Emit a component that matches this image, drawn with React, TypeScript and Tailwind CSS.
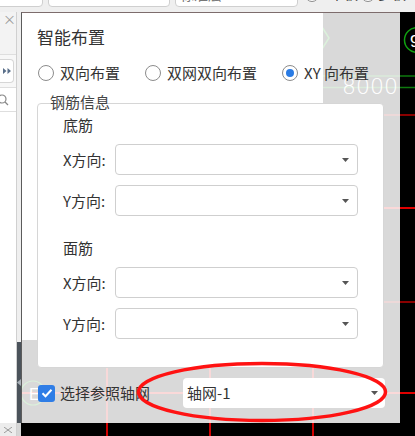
import React from "react";

function Caret() {
  return (
    <svg width="7" height="4" viewBox="0 0 7 4" className="shrink-0">
      <path d="M0 0h7L3.5 4z" fill="#555" />
    </svg>
  );
}

function Select({ value }: { value?: string }) {
  return (
    <div className="flex h-[31px] w-[243px] items-center justify-between rounded-[4px] border border-[#cfcfcf] bg-white pl-[5px] pr-[8px]">
      <span>{value}</span>
      <Caret />
    </div>
  );
}

function Row({ label }: { label: string }) {
  return (
    <div className="flex items-center">
      <span className="w-[52px] text-[15px] leading-[20px] text-[#333]">{label}</span>
      <Select />
    </div>
  );
}

function Radio({ label, checked }: { label: string; checked?: boolean }) {
  return (
    <div className="flex items-center gap-[6px]">
      <span className="flex h-[16px] w-[16px] items-center justify-center rounded-full border border-[#8c8c8c] bg-white">
        {checked && <span className="h-[8px] w-[8px] rounded-full bg-[#2a7be4]" />}
      </span>
      <span className="text-[15px] leading-[20px] text-[#333]">{label}</span>
    </div>
  );
}

export default function App() {
  return (
    <div className="flex h-[436px] w-[415px] flex-col overflow-hidden bg-black font-['Noto_Sans_CJK_SC','Noto_Sans',sans-serif] text-[#333]">
      {/* top toolbar (cut off) */}
      <div className="h-[12px] shrink-0 overflow-hidden bg-[#efefef]">
        <div className="-mt-[17px] flex h-[24px] items-stretch text-[14px] text-[#777]">
          <div className="-ml-[6px] w-[49px] rounded-[4px] border border-[#cfcfcf] bg-white" />
          <div className="ml-[5px] flex w-[122px] items-start overflow-hidden rounded-[4px] border border-[#cfcfcf] bg-white pl-[14px] pt-[3px] leading-none">
            2F~3F
          </div>
          <div className="ml-[5px] flex w-[123px] items-start overflow-hidden rounded-[4px] border border-[#cfcfcf] bg-white pl-[4px] pt-[3px] leading-none">
            标准层1
          </div>
          <div className="ml-[7px] flex items-start gap-[3px] pt-[3px] leading-none text-[#333]">
            <span className="mt-[2px] h-[14px] w-[14px] rounded-full border border-[#8c8c8c] bg-white" />
            <span className="ml-[8px]">平板</span>
            <span className="mt-[2px] h-[14px] w-[14px] rounded-full border border-[#8c8c8c] bg-white" />
            <span>多板</span>
          </div>
        </div>
      </div>

      <div className="flex h-[424px]">
        {/* left panel */}
        <div className="flex w-[17px] shrink-0 flex-col border-r border-[#d0d0d0] bg-white">
          <div className="h-[43px] border-b border-[#dedede] bg-[#f3f3f3] pl-[3px] text-[13px] leading-[14px] text-[#9a9a9a]">
            ×
          </div>
          <div className="flex h-[33px] items-center border-b border-[#dedede] bg-[#f7f7f7]">
            <div className="flex h-[24px] w-[14px] items-center justify-center rounded-r-[4px] border border-l-0 border-[#d6d6d6] bg-white">
              <svg width="8" height="6" viewBox="0 0 8 6">
                <path d="M0 0l3.5 3L0 6zM4.5 0L8 3 4.5 6z" fill="#5a6f8a" />
              </svg>
            </div>
          </div>
          <div className="flex h-[24px] items-center border-b border-[#dedede]">
            <svg width="10" height="12" viewBox="0 0 10 12">
              <circle cx="2" cy="5" r="4" fill="none" stroke="#888" strokeWidth="1.2" />
              <path d="M5 8l3 3" stroke="#888" strokeWidth="1.2" />
            </svg>
          </div>
          <div className="flex-1" />
          <div className="flex h-[13px] items-center bg-[#ececec] pl-[4px]">
            <svg width="8" height="6" viewBox="0 0 8 6">
              <path d="M0 0l4 3-4 3M8 0L4 3l4 3" fill="none" stroke="#999" strokeWidth="1" />
            </svg>
          </div>
        </div>

        {/* splitter */}
        <div className="flex w-[4px] shrink-0 flex-col">
          <div className="h-[330px] bg-[#efefef]" />
          <div className="flex h-[81px] items-center justify-center bg-[#4b535b]">
            <svg width="4" height="7" viewBox="0 0 4 7">
              <path d="M4 0v7L0 3.5z" fill="#a8b0b8" />
            </svg>
          </div>
          <div className="flex-1 bg-[#d6d6d6]" />
        </div>

        {/* canvas */}
        <div className="relative flex-1 bg-black">
          <svg className="absolute inset-0" width="394" height="424" viewBox="21 12 394 424">
            <line x1="21" y1="76" x2="415" y2="76" stroke="#0e7a0e" strokeWidth="1.5" />
            <line x1="21" y1="87.5" x2="415" y2="87.5" stroke="#0e7a0e" strokeWidth="1.5" />
            <line x1="21" y1="115" x2="415" y2="115" stroke="#8a0000" strokeWidth="2" />
            <line x1="21" y1="208" x2="415" y2="208" stroke="#e00000" strokeWidth="2" />
            <line x1="21" y1="302" x2="415" y2="302" stroke="#8a0000" strokeWidth="2" />
            <line x1="21" y1="393" x2="415" y2="393" stroke="#e00000" strokeWidth="2" />
            <line x1="107" y1="12" x2="107" y2="436" stroke="#d00000" strokeWidth="2" />
            <line x1="210" y1="12" x2="210" y2="436" stroke="#d00000" strokeWidth="2" />
            <line x1="313" y1="12" x2="313" y2="436" stroke="#d00000" strokeWidth="2" />
            <polyline points="322,27 329,38 322,49" fill="none" stroke="#10a010" strokeWidth="1.5" />
            <circle cx="417" cy="40" r="12.5" fill="black" stroke="#10a010" strokeWidth="1.5" />
            <text x="410" y="47" fill="white" fontSize="17" fontFamily="Liberation Sans, sans-serif">9</text>
            <text x="342" y="94" fill="white" fontSize="22" fontFamily="DejaVu Sans, sans-serif" fontWeight="200">8000</text>
            <circle cx="33" cy="393" r="12" fill="none" stroke="#10a010" strokeWidth="1.2" />
            <text x="29" y="400" fill="white" fontSize="16" fontFamily="Liberation Sans, sans-serif">E</text>
          </svg>

          {/* white panel lying under the translucent dialog */}
          <div className="absolute left-0 top-0 h-[328px] w-[302px] bg-white" />

          {/* dialog */}
          <div className="absolute left-0 top-0 flex h-[411px] w-[379px] flex-col border-l border-t border-l-[#5c5c5c] border-t-[#7d6c6c] bg-white/85 px-[15px] pt-[12px]">
            <div className="h-[24px] text-[17px] leading-[24px] text-[#333]">智能布置</div>
            <div className="ml-[1px] mt-[14px] flex h-[20px] items-center gap-[25px]">
              <Radio label="双向布置" />
              <Radio label="双网双向布置" />
              <Radio label="XY 向布置" checked />
            </div>
            <div className="relative mt-[20px] h-[265px] w-[347px] shrink-0 rounded-[4px] border border-[#d6d6d6] bg-white pl-[25px] pt-[11px]">
              <span className="absolute -top-[12px] left-[12px] text-[15px] leading-[20px] text-[#444]">钢筋信息</span>
              <div className="h-[20px] text-[15px] leading-[20px]">底筋</div>
              <div className="mt-[9px] flex flex-col gap-[10px]">
                <Row label="X方向:" />
                <Row label="Y方向:" />
              </div>
              <div className="mt-[22px] h-[20px] text-[15px] leading-[20px]">面筋</div>
              <div className="mt-[9px] flex flex-col gap-[10px]">
                <Row label="X方向:" />
                <Row label="Y方向:" />
              </div>
            </div>
            <div className="mt-[10px] flex h-[30px] items-center justify-between">
              <div className="ml-[1px] flex items-center gap-[5px]">
                <span className="flex h-[17px] w-[17px] items-center justify-center rounded-[3px] bg-[#2f7de6]">
                  <svg width="12" height="10" viewBox="0 0 12 10">
                    <path d="M1.5 5.2l3 3 6-6.5" fill="none" stroke="white" strokeWidth="2" />
                  </svg>
                </span>
                <span className="text-[15px] leading-[20px] text-[#333]">选择参照轴网</span>
              </div>
              <div className="flex h-[30px] w-[202px] items-center justify-between rounded-[4px] bg-white pl-[4px] pr-[7px] text-[15px]">
                <span>轴网-1</span>
                <Caret />
              </div>
            </div>
          </div>

          {/* red annotation ellipse */}
          <svg className="pointer-events-none absolute inset-0" width="394" height="424" viewBox="21 12 394 424">
            <ellipse cx="262" cy="392" rx="123.5" ry="28.5" fill="none" stroke="#ff1212" strokeWidth="3.5" />
          </svg>
        </div>
      </div>
    </div>
  );
}
